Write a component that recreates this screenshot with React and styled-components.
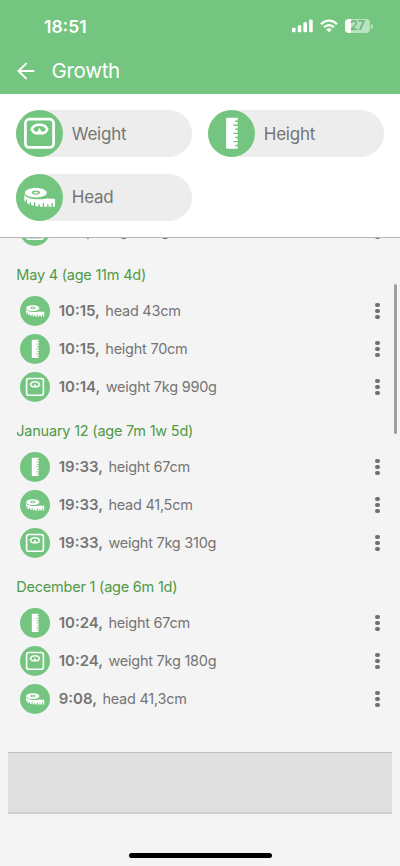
import React from 'react';
import styled, { createGlobalStyle, ThemeProvider } from 'styled-components';

const theme = {
  GREEN: '#74c57f',
  GREEN_DARK: '#4f9a47',
  TEXT: '#757575',
  BACKGROUND: '#f4f4f4',
  PILL: '#ededed',
};

const groups = [
  {
    title: null,
    entries: [{ time: '9:17,', type: 'weight', value: 'weight 8kg' }],
  },
  {
    title: 'May 4 (age 11m 4d)',
    entries: [
      { time: '10:15,', type: 'head', value: 'head 43cm' },
      { time: '10:15,', type: 'height', value: 'height 70cm' },
      { time: '10:14,', type: 'weight', value: 'weight 7kg 990g' },
    ],
  },
  {
    title: 'January 12 (age 7m 1w 5d)',
    entries: [
      { time: '19:33,', type: 'height', value: 'height 67cm' },
      { time: '19:33,', type: 'head', value: 'head 41,5cm' },
      { time: '19:33,', type: 'weight', value: 'weight 7kg 310g' },
    ],
  },
  {
    title: 'December 1 (age 6m 1d)',
    entries: [
      { time: '10:24,', type: 'height', value: 'height 67cm' },
      { time: '10:24,', type: 'weight', value: 'weight 7kg 180g' },
      { time: '9:08,', type: 'head', value: 'head 41,3cm' },
    ],
  },
];

const filters = [
  { type: 'weight', label: 'Weight' },
  { type: 'height', label: 'Height' },
  { type: 'head', label: 'Head' },
];

const ScaleIcon = () => (
  <svg viewBox="0 0 48 48" fill="none" stroke="#fff">
    <rect x="9.6" y="9.4" width="28.8" height="28.8" rx="4" strokeWidth="2.8" />
    <path
      d="M16 19.6 C18.5 13.6 29.5 13.6 32 19.6 C30.5 22.6 29.4 23.6 27.6 23.6 H20.4 C18.6 23.6 17.5 22.6 16 19.6 Z"
      strokeWidth="2.6"
      strokeLinejoin="round"
    />
    <circle cx="24" cy="22.4" r="2.2" fill="#fff" stroke="none" />
    <path d="M24 18.6 V23" strokeWidth="1.4" />
  </svg>
);

const RulerIcon = () => (
  <svg viewBox="0 0 48 48">
    <path
      fill="#fff"
      d="M19.7 8 H30.3 V10.8 H27.7 V12.2 H30.3 V14.9 H25.9 V16.3 H30.3 V19 H27.7 V20.4 H30.3 V23.2 H25.9 V24.6 H30.3 V27.4 H27.7 V28.8 H30.3 V31.6 H25.9 V33 H30.3 V35.6 H27.7 V37 H30.3 V39.5 H19.7 Q18.5 39.5 18.5 38.3 V9.2 Q18.5 8 19.7 8 Z"
    />
  </svg>
);

const TapeIcon = () => (
  <svg viewBox="0 0 48 48">
    <path
      fill="#fff"
      d="M8.5 20.6 C9.5 25.4 24 27.6 33 24.4 V25.4 H39.8 V33.4 H37.6 V29.5 H36.2 V33.4 H33.2 V31 H31.8 V33.4 H28.7 V29.5 H27.3 V33.4 H24.3 V31 H22.9 V33.2 L19.8 32.8 V28.8 H18.4 V32.5 L15.4 31.6 V28.8 H14 V31.1 L11.2 29.8 V26 H9.8 V28.9 Q8.5 28 8.5 26.4 Z"
    />
    <path
      fill="#fff"
      fillRule="evenodd"
      d="M20.3 14.3 C27 14.3 31.4 16.6 31.4 19.2 C31.4 22 27 23.9 20.3 23.9 C13.5 23.9 9 22 9 19.2 C9 16.6 13.5 14.3 20.3 14.3 Z M20.3 16.9 C17.8 16.9 16 17.8 16 19 C16 20.3 17.8 21.2 20.3 21.2 C22.8 21.2 24.6 20.3 24.6 19 C24.6 17.8 22.8 16.9 20.3 16.9 Z"
    />
    <ellipse cx="20.3" cy="19" rx="2.3" ry="0.9" fill="#fff" />
  </svg>
);

const icons = {
  weight: ScaleIcon,
  height: RulerIcon,
  head: TapeIcon,
};

const TypeIcon = ({ type, size, glyph }) => {
  const Icon = icons[type];
  return (
    <IconCircle $size={size} $glyph={glyph}>
      <Icon />
    </IconCircle>
  );
};

const StatusIcons = () => (
  <StatusIconRow>
    <svg width="21" height="14" viewBox="0 0 21 14" fill="#fff">
      <rect x="0" y="8.8" width="3.6" height="4.4" rx="1" />
      <rect x="5.7" y="6.3" width="3.6" height="6.9" rx="1" />
      <rect x="11.4" y="3.3" width="3.6" height="9.9" rx="1" />
      <rect x="17.1" y="0.4" width="3.6" height="12.8" rx="1" />
    </svg>
    <svg width="18" height="14" viewBox="0 0 18 14" fill="none" stroke="#fff" strokeWidth="2.3">
      <path d="M1 5.2 C5.5 0.5 12.5 0.5 17 5.2" />
      <path d="M4 8.3 C6.8 5.4 11.2 5.4 14 8.3" />
      <path d="M9 13.2 L6.2 10.4 C7.7 9 10.3 9 11.8 10.4 Z" fill="#fff" stroke="none" />
    </svg>
    <BatteryGroup>
      <Battery>27</Battery>
      <BatteryTip />
    </BatteryGroup>
  </StatusIconRow>
);

const App = () => {
  const renderEntry = (entry, idx) => (
    <Entry key={idx}>
      <TypeIcon type={entry.type} size={30} glyph={28} />
      <EntryText>
        <Time>{entry.time}</Time> {entry.value}
      </EntryText>
      <MenuDots>
        <Dot />
        <Dot />
        <Dot />
      </MenuDots>
    </Entry>
  );

  return (
    <ThemeProvider theme={theme}>
      <GlobalStyle />
      <Screen>
        <Header>
          <StatusBar>
            <Clock>18:51</Clock>
            <StatusIcons />
          </StatusBar>
          <TitleBar>
            <svg width="18" height="18" viewBox="0 0 18 18" fill="none" stroke="#fff" strokeWidth="2" strokeLinecap="round">
              <path d="M16.6 9 H1.8 M9 1.6 L1.5 9 L9 16.4" />
            </svg>
            <Title>Growth</Title>
          </TitleBar>
        </Header>
        <Filters>
          {filters.map((f) => (
            <FilterPill key={f.type}>
              <TypeIcon type={f.type} size={47} glyph={47} />
              <span>{f.label}</span>
            </FilterPill>
          ))}
        </Filters>
        <Content>
          <EntryList>
            {groups.map((group, idx) => (
              <li key={idx}>
                {group.title && <GroupTitle>{group.title}</GroupTitle>}
                {group.entries.map(renderEntry)}
              </li>
            ))}
          </EntryList>
          <AdBanner />
          <Scrollbar />
        </Content>
        <HomeIndicator />
      </Screen>
    </ThemeProvider>
  );
};

const GlobalStyle = createGlobalStyle`
  body {
    margin: 0;
    font-family: Inter, "Liberation Sans", sans-serif;
    color: ${theme.TEXT};
  }
`;

const Screen = styled.div`
  display: flex;
  flex-direction: column;
  width: 400px;
  height: 866px;
  overflow: hidden;
  background-color: ${(props) => props.theme.BACKGROUND};
`;

const Header = styled.header`
  flex: none;
  height: 94px;
  color: #fff;
  background-color: ${(props) => props.theme.GREEN};
`;

const StatusBar = styled.div`
  display: flex;
  justify-content: space-between;
  align-items: center;
  height: 24px;
  padding: 14px 27px 10px 44px;
`;

const Clock = styled.div`
  font-size: 17.5px;
  font-weight: 600;
`;

const StatusIconRow = styled.div`
  display: flex;
  align-items: center;
  gap: 7px;
`;

const BatteryGroup = styled.div`
  display: flex;
  align-items: center;
  gap: 1px;
`;

const Battery = styled.div`
  width: 25px;
  height: 14px;
  border-radius: 4px;
  background: linear-gradient(90deg, #fff 25%, #b9e2bf 25%);
  color: #6fb879;
  font-size: 12.5px;
  font-weight: 700;
  line-height: 14px;
  text-align: center;
`;

const BatteryTip = styled.div`
  width: 2px;
  height: 5px;
  border-radius: 0 2px 2px 0;
  background-color: #b9e2bf;
`;

const TitleBar = styled.div`
  display: flex;
  align-items: center;
  gap: 16.5px;
  height: 45px;
  padding-left: 17px;
`;

const Title = styled.h1`
  margin: 0;
  font-size: 20.5px;
  font-weight: 400;
  letter-spacing: -0.3px;
`;

const Filters = styled.div`
  flex: none;
  display: grid;
  grid-template-columns: 175.5px 175.5px;
  grid-auto-rows: 47px;
  gap: 16.5px;
  box-sizing: border-box;
  height: 144px;
  padding: 16px 16px 0 16.3px;
  border-bottom: 1px solid #b5b5b5;
  background-color: #fff;
`;

const FilterPill = styled.div`
  display: flex;
  align-items: center;
  gap: 8.5px;
  border-radius: 24px;
  background-color: ${(props) => props.theme.PILL};
  font-size: 17px;
  letter-spacing: -0.25px;
`;

const IconCircle = styled.div`
  flex: none;
  display: flex;
  align-items: center;
  justify-content: center;
  width: ${(props) => props.$size}px;
  height: ${(props) => props.$size}px;
  border-radius: 50%;
  background-color: ${(props) => props.theme.GREEN};

  svg {
    width: ${(props) => props.$glyph}px;
    height: ${(props) => props.$glyph}px;
  }
`;

const Content = styled.main`
  position: relative;
  flex: 1;
  overflow: hidden;
`;

// pulled up so that the list looks scrolled under the filters
const EntryList = styled.ul`
  list-style: none;
  margin: -26px 0 0;
  padding: 0;
`;

const GroupTitle = styled.h2`
  box-sizing: border-box;
  height: 42px;
  margin: 0;
  padding: 8px 16.3px 0;
  font-size: 14.5px;
  font-weight: 400;
  line-height: 34px;
  letter-spacing: -0.22px;
  color: ${(props) => props.theme.GREEN_DARK};
`;

const Entry = styled.div`
  display: flex;
  align-items: center;
  height: 38px;
  padding: 0 20px 0 20.3px;
`;

const EntryText = styled.div`
  flex: 1;
  margin-left: 8.4px;
  padding-bottom: 1px;
  font-size: 14.5px;
  letter-spacing: -0.25px;
`;

const Time = styled.b`
  margin-right: 1.6px;
  font-size: 15px;
  font-weight: 600;
  letter-spacing: 0;
`;

const MenuDots = styled.div`
  display: flex;
  flex-direction: column;
  gap: 2px;
  padding-right: 0.5px;
`;

const Dot = styled.div`
  width: 4.2px;
  height: 4.2px;
  border-radius: 50%;
  background-color: #707070;
`;

const AdBanner = styled.div`
  box-sizing: border-box;
  height: 62px;
  margin: 34px 8px 0;
  border-top: 1px solid #bfbfbf;
  border-bottom: 2px solid #cecece;
  background-color: #dfdfdf;
`;

const Scrollbar = styled.div`
  position: absolute;
  top: 46px;
  right: 3px;
  width: 3px;
  height: 150px;
  border-radius: 2px;
  background-color: #a0a0a0;
`;

const HomeIndicator = styled.div`
  flex: none;
  align-self: center;
  width: 143px;
  height: 5px;
  margin-bottom: 8px;
  border-radius: 3px;
  background-color: #000;
`;

export default App;
